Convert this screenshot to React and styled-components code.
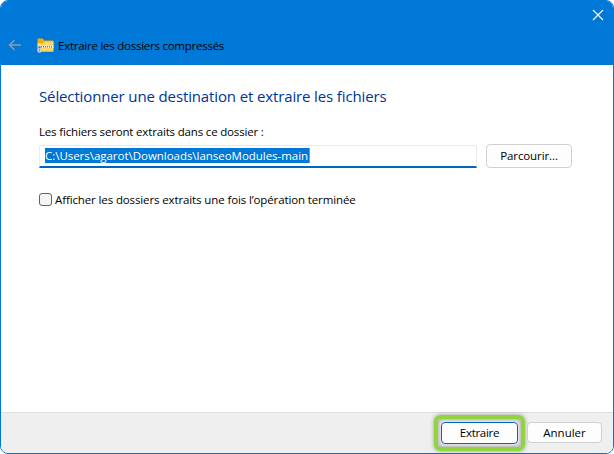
import React from "react";
import styled, { createGlobalStyle } from "styled-components";

const GlobalStyle = createGlobalStyle`
  * { box-sizing: border-box; }
  body { margin: 0; background: #fff; }
`;

const Dialog = styled.div`
  width: 614px;
  height: 454px;
  display: flex;
  flex-direction: column;
  overflow: hidden;
  border: 1px solid #0078d7;
  border-radius: 8px;
  background: #fff;
  font-family: "Open Sans", "Noto Sans", sans-serif;
  font-size: 11.5px;
  line-height: 16px;
  color: #000;
`;

const Header = styled.header`
  flex: none;
  height: 64px;
  background: #0078d7;
`;

const CaptionBar = styled.div`
  height: 28px;
  display: flex;
  justify-content: flex-end;
  padding: 8px 9px 0 0;
`;

const CloseButton = styled.button`
  width: 12px;
  height: 12px;
  padding: 0;
  border: 0;
  background: none;
  svg { display: block; }
`;

const TitleBar = styled.div`
  height: 32px;
  display: flex;
  align-items: center;
  padding-left: 7px;
`;

const BackArrow = styled.svg`
  flex: none;
  width: 14px;
  height: 12px;
  margin-right: 15px;
`;

const FolderIcon = styled.svg`
  flex: none;
  width: 17px;
  height: 15px;
  margin-right: 4px;
`;

const Text = styled.span`
  white-space: pre;
  letter-spacing: ${(p) => p.$track || 0}px;
`;

const TitleText = styled(Text)`
  margin-top: 2px;
`;

const Content = styled.main`
  flex: 1;
  padding: 20px 41px 0 38px;
`;

const Heading = styled.h1`
  margin: 0;
  font-size: 15px;
  font-weight: 400;
  line-height: 22px;
  color: #003399;
`;

const Label = styled.label`
  display: block;
  margin-top: 17px;
`;

const PathRow = styled.div`
  display: flex;
  align-items: flex-start;
  gap: 9px;
  margin-top: 4px;
`;

const PathField = styled.div`
  width: 438px;
  height: 23px;
  margin-top: 1px;
  padding: 2px 5px 0;
  border: 1px solid #ebebeb;
  border-bottom: 2px solid #0067c0;
  border-radius: 2px 2px 0 0;
`;

const Selection = styled.span`
  display: block;
  width: 265px;
  height: 15px;
  line-height: 16px;
  color: #fff;
  background: #0078d7;
  border-right: 1px solid #d98346;
`;

const Button = styled.button`
  flex: none;
  display: flex;
  align-items: center;
  justify-content: center;
  width: ${(p) => p.$width}px;
  height: ${(p) => p.$height}px;
  padding: 0;
  font: inherit;
  color: #000;
  background: #fdfdfd;
  border: 1px solid ${(p) => (p.$primary ? "#0067c0" : "#d0d0d0")};
  border-radius: 4px;
`;

const Option = styled.div`
  display: flex;
  align-items: flex-start;
  height: 16px;
  gap: 3px;
  margin-top: 24px;
`;

const CheckBox = styled.span`
  width: 13px;
  height: 13px;
  margin-top: 1px;
  border: 1px solid #626262;
  border-radius: 3px;
  background: #f5f5f5;
`;

const Footer = styled.footer`
  flex: none;
  height: 41px;
  display: flex;
  align-items: flex-start;
  justify-content: flex-end;
  gap: 2px;
  padding: 2px 11px 0 0;
  background: #efefef;
  border-top: 1px solid #dedede;
`;

const Highlight = styled.div`
  display: flex;
  align-items: center;
  justify-content: center;
  width: 91px;
  height: 36px;
  border: 4px solid #92d43f;
  border-radius: 6px;
  box-shadow: 0 0 4px rgba(0, 0, 0, 0.35), inset 0 0 5px rgba(0, 0, 0, 0.4);
`;

const CancelSlot = styled.div`
  padding-top: 7px;
`;

export default function App() {
  return (
    <>
      <GlobalStyle />
      <Dialog>
        <Header>
          <CaptionBar>
            <CloseButton aria-label="Fermer">
              <svg width="12" height="12" viewBox="0 0 12 12">
                <path d="M1 1 11 11M11 1 1 11" stroke="#fff" strokeWidth="1.1" fill="none" />
              </svg>
            </CloseButton>
          </CaptionBar>
          <TitleBar>
            <BackArrow viewBox="0 0 14 12">
              <path d="M13 6H1.5M6.5 1 1.5 6l5 5" fill="none" stroke="#8a9db0" strokeWidth="1.5" />
            </BackArrow>
            <FolderIcon viewBox="0 0 17 15">
              <path d="M0.5 1.5Q.5.5 1.5.5H5.5L7.5 2.5H15.5Q16.5 2.5 16.5 3.5V7H.5Z" fill="#f5a90d" />
              <path d="M.5 5H6.5L8 3.5H16.5V13Q16.5 14 15.5 14H1.5Q.5 14 .5 13Z" fill="#ffd75e" />
              <path d="M3 13.5H16" stroke="#e8ae27" />
              <path d="M1 8.7H16.5" stroke="#f3eedc" strokeWidth="2.2" />
              <path d="M4 8.7H16" stroke="#777b80" strokeWidth="1.6" strokeDasharray="1 1" />
              <path d="M1 8H4L4.5 13 3.5 14.8H1.5L.5 13Z" fill="#c9ced4" />
              <circle cx="2.5" cy="9.3" r="1.1" fill="#6d737a" />
              <path d="M2.5 11.5V13.5" stroke="#858b91" />
            </FolderIcon>
            <TitleText $track={-0.25}>Extraire les dossiers compressés</TitleText>
          </TitleBar>
        </Header>
        <Content>
          <Heading><Text $track={-0.13}>Sélectionner une destination et extraire les fichiers</Text></Heading>
          <Label><Text $track={-0.17}>Les fichiers seront extraits dans ce dossier :</Text></Label>
          <PathRow>
            <PathField>
              <Selection><Text $track={-0.03}>{"C:\\Users\\agarot\\Downloads\\lanseoModules-main"}</Text></Selection>
            </PathField>
            <Button $width={86} $height={24}><Text $track={-0.1}>Parcourir...</Text></Button>
          </PathRow>
          <Option>
            <CheckBox />
            <Text $track={-0.12}>Afficher les dossiers extraits une fois l’opération terminée</Text>
          </Option>
        </Content>
        <Footer>
          <Highlight>
            <Button $width={77} $height={22} $primary><Text $track={-0.3}>Extraire</Text></Button>
          </Highlight>
          <CancelSlot>
            <Button $width={75} $height={21}><Text>Annuler</Text></Button>
          </CancelSlot>
        </Footer>
      </Dialog>
    </>
  );
}
